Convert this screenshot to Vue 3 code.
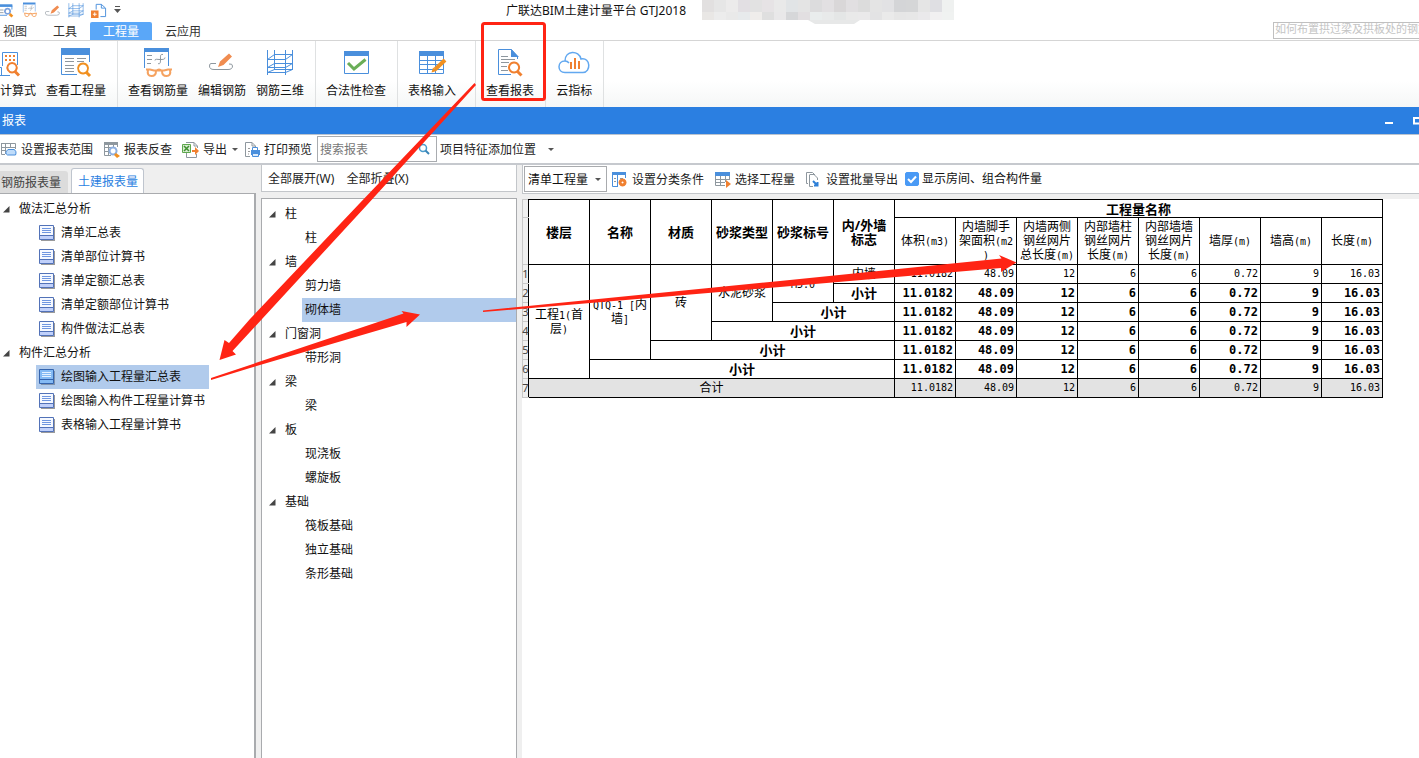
<script setup>
import { ref } from 'vue'

const BLUE = '#4a8fdc'
const ORANGE = '#f08030'
const GRAY = '#8e979e'

const s = (d, stroke, w = 1) => ({ d, stroke, w, fill: 'none' })
const f = (d, fill) => ({ d, fill, stroke: 'none', w: 0 })

const icons = {
  calc: [
    s('M2.500 19V5.500H17.500V18M0 20.500H1.500V28.500M0 28.500H10', BLUE),
    f('M5 8h2v2h-2zM9 8h2v2h-2zM13 8h2v2h-2zM5 12h2v2h-2zM9 12h2v2h-2zM13 12h2v2h-2z', ORANGE),
    s('M12 16a4.700 4.700 0 1 0 .1 0z', ORANGE, 2),
    s('M15 24.500L19 28.500', ORANGE, 3)
  ],
  quantity: [
    f('M1 1h29v7h-29z', BLUE),
    s('M1.500 8V27.500H17M29.500 8V15', BLUE),
    s('M5 11.500H14M17 11.500H26M5 14.500H14M17 14.500H24M5 18.500H14M5 21.500H14M5 24.500H14', GRAY),
    s('M23 16.500a5 5 0 1 0 .1 0z', '#f19020', 2),
    s('M26.500 25.500L30 29', '#f19020', 3)
  ],
  rebarQty: [
    f('M2 1h25v4h-25z', BLUE),
    s('M2.500 5V21M26.500 5V19', BLUE),
    s('M5 8.500H10M5 12.500H10M5 16.500H9M13 13.500C13 11.500 15 12.500 18 12.500S23 12.500 23 10.500M21 7.500C18 7 18.500 9 18.500 12S18.500 17.500 16 16.500', GRAY),
    s('M4 22.500H8L12 23.500H22L26 22.500H30M6 23C5 27 6.500 29 9.500 29S14 28 14 24M28 23C29 27 27.500 29 24.500 29S20 28 20 24M14 24C16 22 18 22 20 24', '#f5a260', 2)
  ],
  edit: [
    f('M12 20L14 14.500L23 6.500L26 9.500L17.500 18zM14.500 15.500L17 18', '#f08c50'),
    s('M10 16.500H5Q3.500 16.500 3.500 19Q3.500 22.500 8 22.500H22Q26.500 22.500 26.500 19Q26.500 16.500 23 17', GRAY)
  ],
  grid3d: [
    s('M3.500 3V28M10.500 3V23M21.500 3V28M28.500 3V23M10 7.500H29M3 12.500H22M10 16.500H29M3 20.500H22M10 22.500H29M3 25.500H22M3.500 12.500L10.500 7.500M21.500 12.500L28.500 7.500M3.500 20.500L10.500 16.500M21.500 20.500L28.500 16.500M3.500 25.500L10.500 22.500M21.500 25.500L28.500 22.500', BLUE)
  ],
  check: [
    s('M4.500 4.500H28.500V26.500H4.500z', BLUE),
    f('M4 4h25v5h-25z', BLUE),
    s('M8 16L14 22L25.500 12.500', '#6aae58', 3)
  ],
  tableEdit: [
    s('M3.500 5V26.500H27.500V5M11.500 9V26M19.500 9V26M4 13.500H27M4 17.500H27M4 22.500H27', BLUE),
    f('M3 4h25v5h-25z', BLUE),
    s('M29 13L19 22.500', '#f19020', 4),
    f('M15.500 25.500L17 20.500L20.500 24z', '#f19020')
  ],
  report: [
    s('M23.500 12V9.500L17.500 2.500H4.500V27.500H17', BLUE),
    f('M17 2L25 10H17z', BLUE),
    s('M7 9.500H14M7 12.500H21M7 15.500H15M7 19.500H13M7 23.500H14', GRAY),
    s('M20 15.500a5 5 0 1 0 .1 0z', ORANGE, 2),
    s('M23.500 24.500L27.500 28.500', ORANGE, 3)
  ],
  cloud: [
    s('M7 25.500C-1 25.500 -1 14 7 14C7 3 21 3 23 12C33 10 33 25.500 25 25.500zM7 14Q9.500 14 11 16', '#62a8f0', 1.5),
    s('M13 22V15M17 22V11M21 22V14', ORANGE, 2)
  ],
  qaFind: [
    s('M0 3.500H13.500V8M0 14.500H8', BLUE),
    f('M0 2h14v3h-14z', BLUE),
    s('M0 8.500H4M0 11.500H4', GRAY),
    s('M8.500 7a3 3 0 1 0 .1 0z', '#7aa0dc', 2),
    s('M11 13L14 16', '#f19020', 3)
  ],
  qaAdd: [
    s('M5.500 8V2.500H11L15.500 6.500V15.500H10M11 2.500V6.500H15', BLUE),
    f('M0 9h8v8h-8z', ORANGE),
    s('M4 11V15M2 13H6', '#fff')
  ],
  range: [
    s('M1.500 2.500H15.500V8M1.500 2V13.500H5M1 6.500H15M1 9.500H6M5.500 3V13M10.500 3V7', GRAY),
    f('M8 8H14Q17 10 16 14H7Q4 12 8 8z', '#bfdcfa'),
    s('M8 8.500H14Q17 10 15.500 14H7.500Q4 12 8 8.500z', BLUE)
  ],
  lookup: [
    s('M1.500 2.500H14.500V6M1.500 2V14.500H8M1 6.500H8M1 10.500H6M5.500 3V14M10.500 3V6', GRAY),
    f('M1 1h14v3h-14z', GRAY),
    s('M10 6.500a3.500 3.500 0 1 0 .1 0z', '#8fb0e0', 2),
    f('M11 14L13 12L17 15L14 17z', '#f19020')
  ],
  exportX: [
    s('M4 1.500H12L15.500 5V7M4.500 12V16.500H14.500V13M12 1.500V5H15', GRAY),
    s('M.500 3.500H8.500V11.500H.500z', '#5ea84d', 1),
    f('M1 4h7v7h-7z', '#d8ecd2'),
    s('M2 5L7 10M7 5L2 10', '#3f9030', 1.5),
    f('M10 9H13V6L17 10L13 14V11H10z', ORANGE)
  ],
  print: [
    s('M6 15.500H1.500V1.500H8L11.500 5V7M8 1.500V5H11', GRAY),
    s('M4 7.500H6M4 10.500H6M4 13H5', '#999'),
    f('M7 9H16V14H7z', BLUE),
    s('M8.500 9V6.500H13.500V9', BLUE),
    f('M9 12h5v4h-5z', '#dcebfb'),
    s('M8.500 12.500H14.500V15.500H8.500z', BLUE)
  ],
  classify: [
    s('M1.500 2.500H14.500V7M1.500 2V15.500H7M6.500 4V15', BLUE),
    f('M1 1h14v3h-14z', BLUE),
    s('M3 7.500H5M3 10.500H5M9 7.500H12', GRAY),
    s('M11.500 9a2.500 2.500 0 1 0 .1 0z', ORANGE, 3)
  ],
  select: [
    s('M1.500 2.500H15.500V9M1.500 3V14.500H11M6.500 5V14M11.500 5V11M1 8.500H15M1 11.500H11', GRAY),
    f('M1 1h15v4h-15z', BLUE),
    f('M12 9L17 13L12 17z', ORANGE)
  ],
  batch: [
    s('M3 12.500H1.500V1.500H7.500L10 4M4.500 3.500H9L12.500 7V9M4.500 4V15.500H8', GRAY),
    s('M8 10L12.500 14.500M9 14.500H12.500V11', '#2f80d8', 2)
  ],
  page: [
    f('M2 2h14v14h-14z', '#9a9a9a'),
    f('M1 1h14v14h-14z', '#f6f9ff'),
    f('M1 11h14v4h-14z', '#c0d0fa'),
    s('M.500.500H14.500V14.500H.500zM1 10.500H14', '#5272b8'),
    s('M3 3.500H12M3 5.500H12M3 7.500H12', '#6f96e0')
  ],
  pageOn: [
    f('M2 2h14v14h-14z', '#7f93ad'),
    f('M1 1h14v14h-14z', '#84baf4'),
    s('M.500.500H14.500V14.500H.500zM1 10.500H14', '#3464ae'),
    s('M3 3.500H12M3 5.500H12M3 7.500H12', '#e4f1ff')
  ]
}

const quick = [
  { icon: 'qaFind', box: '0 0 17 17', name: '查看工程量' },
  { icon: 'rebarQty', box: '0 0 32 32', name: '查看钢筋量' },
  { icon: 'edit', box: '3 1 26 26', name: '编辑钢筋' },
  { icon: 'grid3d', box: '2 1 28 28', name: '钢筋三维' },
  { icon: 'qaAdd', box: '0 0 17 17', name: '新建' }
]

const menu = ['视图', '工具', '工程量', '云应用']
const activeMenu = ref('工程量')

const ribbon = [
  [{ icon: 'calc', label: '计算式' }, { icon: 'quantity', label: '查看工程量' }],
  [{ icon: 'rebarQty', label: '查看钢筋量' }, { icon: 'edit', label: '编辑钢筋' }, { icon: 'grid3d', label: '钢筋三维' }],
  [{ icon: 'check', label: '合法性检查' }],
  [{ icon: 'tableEdit', label: '表格输入' }],
  [{ icon: 'report', label: '查看报表' }],
  [{ icon: 'cloud', label: '云指标' }]
]

const shades = [
  ['#e2e0e0', '#e6e6e6', '#ecebeb', '#e2dfe3', '#e2e2e2', '#e6e3e5', '#e9e9e9', '#e1e4e6', '#e4e4e4', '#dcdcdd', '#e2e0e2', '#d9d7d8', '#e1dfe1', '#dcdcdc', '#e4e4e4', '#e2e2e4', '#d4d5d7', '#d5d6d7', '#e5e5e5', '#dfdfe3', '#eff1f0'],
  ['#e9e7e5', '#ececec', '#e9e9e9', '#e7eaec', '#efedeb', '#dfdfdf', '#e9e8e9', '#d6d7d9', '#e2dfe1', '#e9eded', '#e8eaea', '#e4e6e6', '#e9e9e9', '#eae9ea', '#e3e3e4', '#eaeaea', '#e6e6e6', '#e7e7e7', '#eae9eb', '#f1f0f1', '#f0f2f1']
]

const activeReport = ref('绘图输入工程量汇总表')
const reports = [
  { name: '做法汇总分析', items: ['清单汇总表', '清单部位计算书', '清单定额汇总表', '清单定额部位计算书', '构件做法汇总表'] },
  { name: '构件汇总分析', items: ['绘图输入工程量汇总表', '绘图输入构件工程量计算书', '表格输入工程量计算书'] }
]

const activePart = ref('砌体墙')
const parts = [
  { name: '柱', items: ['柱'] },
  { name: '墙', items: ['剪力墙', '砌体墙'] },
  { name: '门窗洞', items: ['带形洞'] },
  { name: '梁', items: ['梁'] },
  { name: '板', items: ['现浇板', '螺旋板'] },
  { name: '基础', items: ['筏板基础', '独立基础', '条形基础'] }
]

const keyHeads = [['楼层'], ['名称'], ['材质'], ['砂浆类型'], ['砂浆标号'], ['内/外墙', '标志']]
const valueHeads = [
  ['体积(m3)'],
  ['内墙脚手', '架面积(m2', ')'],
  ['内墙两侧', '钢丝网片', '总长度(m)'],
  ['内部墙柱', '钢丝网片', '长度(m)'],
  ['内部墙墙', '钢丝网片', '长度(m)'],
  ['墙厚(m)'],
  ['墙高(m)'],
  ['长度(m)']
]
const values = ['11.0182', '48.09', '12', '6', '6', '0.72', '9', '16.03']
const rows = [
  {
    cells: [
      { lines: ['工程1(首', '层)'], rows: 6 },
      { lines: ['QTQ-1 [内', '墙]'], rows: 5 },
      { lines: ['砖'], rows: 4 },
      { lines: ['水泥砂浆'], rows: 3 },
      { lines: ['M5.0'], rows: 2 },
      { lines: ['内墙'] }
    ]
  },
  ...[1, 2, 3, 4, 5].map((n) => ({ strong: true, cells: [{ lines: ['小计'], cols: n }] })),
  { total: true, cells: [{ lines: ['合计'], cols: 6 }] }
]

const pieces = (line) => line.split(/([\x20-\x7e]+)/).filter(Boolean)
const isLatin = (t) => /^[\x20-\x7e]/.test(t)

const search = ref('')
const help = ref('')
const mode = ref('清单工程量')
const showRooms = ref(true)
</script>

<template>
  <div class="app">
    <header class="title-row">
      <div class="quick">
        <button v-for="q in quick" :key="q.icon" :aria-label="q.name">
          <svg :viewBox="q.box" width="16" height="16">
            <path v-for="(p, i) in icons[q.icon]" :key="i" :d="p.d" :fill="p.fill" :stroke="p.stroke" :stroke-width="p.w" />
          </svg>
        </button>
        <button aria-label="自定义快速访问" class="more">
          <svg width="7" height="8"><path d="M1 .500H6" stroke="#555" /><path d="M0 3H7L3.500 7z" fill="#555" /></svg>
        </button>
      </div>
      <div class="title">广联达BIM土建计量平台 GTJ2018</div>
      <svg class="mosaic" width="252" height="24" aria-hidden="true">
        <path d="M106 20H158L152 24H113z" fill="#e7e8e8" />
        <g v-for="(line, r) in shades" :key="r">
          <rect v-for="(c, i) in line" :key="i" :x="i * 12" :y="r * 12" width="12" :height="r ? 8 : 12" :fill="c" />
        </g>
      </svg>
    </header>

    <nav class="menu">
      <button v-for="m in menu" :key="m" :class="{ on: m === activeMenu }" @click="activeMenu = m">{{ m }}</button>
      <input v-model="help" class="help" aria-label="帮助搜索" placeholder="如何布置拱过梁及拱板处的钢筋" />
    </nav>

    <section class="ribbon">
      <div v-for="(group, g) in ribbon" :key="g" class="group">
        <button v-for="b in group" :key="b.label">
          <svg width="32" height="32">
            <path v-for="(p, i) in icons[b.icon]" :key="i" :d="p.d" :fill="p.fill" :stroke="p.stroke" :stroke-width="p.w" />
          </svg>
          <span>{{ b.label }}</span>
        </button>
      </div>
    </section>

    <div class="window-bar">
      <h1>报表</h1>
      <button aria-label="最小化"><svg width="8" height="8"><path d="M0 5h8v2h-8z" fill="#fff" /></svg></button>
      <button aria-label="最大化" class="max"><svg width="6" height="8"><path d="M7 1H1V6.500H7" fill="none" stroke="#fff" stroke-width="2" /></svg></button>
    </div>

    <div class="toolbar">
      <button class="tool range">
        <svg width="18" height="18"><path v-for="(p, i) in icons.range" :key="i" :d="p.d" :fill="p.fill" :stroke="p.stroke" :stroke-width="p.w" /></svg>设置报表范围
      </button>
      <button class="tool">
        <svg width="18" height="18"><path v-for="(p, i) in icons.lookup" :key="i" :d="p.d" :fill="p.fill" :stroke="p.stroke" :stroke-width="p.w" /></svg>报表反查
      </button>
      <button class="tool export">
        <svg width="18" height="18"><path v-for="(p, i) in icons.exportX" :key="i" :d="p.d" :fill="p.fill" :stroke="p.stroke" :stroke-width="p.w" /></svg>导出<i class="caret"></i>
      </button>
      <button class="tool print">
        <svg width="18" height="18"><path v-for="(p, i) in icons.print" :key="i" :d="p.d" :fill="p.fill" :stroke="p.stroke" :stroke-width="p.w" /></svg>打印预览
      </button>
      <label class="search">
        <input v-model="search" aria-label="搜索报表" placeholder="搜索报表" />
        <svg width="12" height="12"><circle cx="5" cy="5" r="3.500" fill="none" stroke="#4a9ccc" stroke-width="1.500" /><path d="M7.500 7.500L11 11" stroke="#3a86b8" stroke-width="2" /></svg>
      </label>
      <button class="tool feature">项目特征添加位置<i class="caret"></i></button>
    </div>

    <main class="body">
      <aside class="left">
        <div class="tabs">
          <button>钢筋报表量</button>
          <button class="on">土建报表量</button>
        </div>
        <div class="panel">
          <ul class="tree reports">
            <li v-for="g in reports" :key="g.name">
              <button class="parent"><svg width="7" height="7"><path d="M6.500 0V6.500H0z" fill="#444" /></svg>{{ g.name }}</button>
              <ul>
                <li v-for="item in g.items" :key="item">
                  <button class="leaf" :class="{ on: item === activeReport }" @click="activeReport = item">
                    <svg width="17" height="17"><path v-for="(p, i) in icons[item === activeReport ? 'pageOn' : 'page']" :key="i" :d="p.d" :fill="p.fill" :stroke="p.stroke" :stroke-width="p.w" /></svg>{{ item }}
                  </button>
                </li>
              </ul>
            </li>
          </ul>
        </div>
      </aside>

      <section class="middle">
        <div class="fold">
          <button>全部展开(W)</button>
          <button>全部折叠(X)</button>
        </div>
        <div class="panel">
          <ul class="tree parts">
            <li v-for="g in parts" :key="g.name">
              <button class="parent"><svg width="7" height="7"><path d="M6.500 0V6.500H0z" fill="#444" /></svg>{{ g.name }}</button>
              <ul>
                <li v-for="item in g.items" :key="item">
                  <button class="leaf" :class="{ on: item === activePart }" @click="activePart = item">{{ item }}</button>
                </li>
              </ul>
            </li>
          </ul>
        </div>
      </section>

      <section class="right">
        <div class="options">
          <div class="mode">
            <select v-model="mode" aria-label="工程量类型"><option>清单工程量</option><option>定额工程量</option></select>
            <i class="caret"></i>
          </div>
          <button class="tool">
            <svg width="18" height="18"><path v-for="(p, i) in icons.classify" :key="i" :d="p.d" :fill="p.fill" :stroke="p.stroke" :stroke-width="p.w" /></svg>设置分类条件
          </button>
          <button class="tool">
            <svg width="18" height="18"><path v-for="(p, i) in icons.select" :key="i" :d="p.d" :fill="p.fill" :stroke="p.stroke" :stroke-width="p.w" /></svg>选择工程量
          </button>
          <button class="tool">
            <svg width="18" height="18"><path v-for="(p, i) in icons.batch" :key="i" :d="p.d" :fill="p.fill" :stroke="p.stroke" :stroke-width="p.w" /></svg>设置批量导出
          </button>
          <label class="rooms">
            <input v-model="showRooms" type="checkbox" />
            <svg class="tick" width="14" height="14"><path v-if="showRooms" d="M3 7L6 10L11 4.500" fill="none" stroke="#fff" stroke-width="2" /></svg>
            显示房间、组合构件量
          </label>
        </div>
        <div class="sheet">
          <table>
            <colgroup><col class="num" /><col v-for="n in 14" :key="n" class="data" /></colgroup>
            <thead>
              <tr class="h1">
                <td class="rownum"></td>
                <th v-for="(h, i) in keyHeads" :key="i" rowspan="2" scope="col"><div v-for="l in h" :key="l">{{ l }}</div></th>
                <th colspan="8" scope="colgroup">工程量名称</th>
              </tr>
              <tr class="h2">
                <td class="rownum"></td>
                <th v-for="(h, i) in valueHeads" :key="i" scope="col" class="light">
                  <div v-for="l in h" :key="l"><span v-for="(t, k) in pieces(l)" :key="k" :class="{ latin: isLatin(t) }">{{ t }}</span></div>
                </th>
              </tr>
            </thead>
            <tbody>
              <tr v-for="(row, r) in rows" :key="r" :class="{ strong: row.strong, total: row.total }">
                <td class="rownum"><span>{{ r + 1 }}</span></td>
                <td v-for="(c, i) in row.cells" :key="i" :rowspan="c.rows || 1" :colspan="c.cols || 1">
                  <div v-for="l in c.lines" :key="l"><span v-for="(t, k) in pieces(l)" :key="k" :class="{ latin: isLatin(t) }">{{ t }}</span></div>
                </td>
                <td v-for="(v, i) in values" :key="'v' + i" class="value">{{ v }}</td>
              </tr>
            </tbody>
          </table>
        </div>
      </section>
    </main>

    <svg class="marks" width="1100" height="400" aria-hidden="true">
      <rect x="482.500" y="23.500" width="62" height="76" rx="2" fill="none" stroke="#ff2414" stroke-width="3" />
      <g fill="#ff2414">
        <path d="M474.500 83L476 85L367 205L250 332L232.500 351L236 354.500L219.500 360L224.500 340L229 343L250 319L359 204z" />
        <path d="M211 378L403.500 313.500L401.500 311L420 314.500L406.500 327L406.500 322L250 368L211 380z" />
        <path d="M483 310.500L780 281L1001.500 258.500L999 255L1016.500 262.500L1001 272L1001 268L780 287L483 312z" />
      </g>
    </svg>
  </div>
</template>

<style>
html, body { margin: 0; background: #fff; }
</style>

<style scoped>
.app {
  position: relative;
  display: flex;
  flex-direction: column;
  height: 100vh;
  overflow: hidden;
  font: 12px/16px "Noto Sans", "Noto Sans CJK SC", sans-serif;
  color: #111;
  background: #fff;
}
button, input, select { font: inherit; color: inherit; margin: 0; }
button { border: 0; padding: 0; background: none; white-space: nowrap; cursor: pointer; }
svg { display: block; flex: none; }
ul { list-style: none; margin: 0; padding: 0; }

.title-row { display: grid; grid-template-columns: 506px 196px 1fr; flex: none; height: 22px; }
.quick { display: flex; align-items: center; gap: 7px; height: 20px; }
.quick button:first-child svg { width: 15px; }
.title { line-height: 21px; white-space: nowrap; }
.mosaic { overflow: visible; }

.menu { display: flex; flex: none; height: 18px; border-bottom: 1px solid #d5d5d5; }
.menu button { padding: 2px 13px 0; line-height: 16px; color: #333; }
.menu button:first-child { padding-left: 3px; }
.menu button.on { background: #5aa7f8; color: #fff; border-radius: 2px 2px 0 0; }
.help {
  box-sizing: border-box;
  width: 146px;
  height: 17px;
  margin-left: auto;
  padding: 0 0 5px 1px;
  border: 1px solid #c0c0c0;
  border-right: 0;
  font-size: 11px;
  background: #fff;
}
.help::placeholder { color: #c4c4c4; }

.ribbon { display: flex; flex: none; height: 66px; background: linear-gradient(#fff 60%, #f5f7f7); }
.group { display: flex; gap: 10px; padding: 6px 11px 0 10px; border-right: 1px solid #dfe1e2; }
.group:first-child { padding-left: 0; }
.group:nth-child(4) { padding-right: 19px; }
.group button { display: flex; flex-direction: column; align-items: center; gap: 4px; height: 52px; }
.group:first-child button:first-child { align-items: flex-start; }

.window-bar { display: flex; align-items: center; flex: none; height: 27px; background: #2b7fe1; border-bottom: 1px solid #b9c3cf; color: #fff; }
.window-bar h1 { flex: 1; margin: 0; padding-left: 2px; font-size: 12px; font-weight: 400; }
.window-bar .max { margin-left: 20px; }

.toolbar { display: flex; align-items: center; flex: none; height: 28px; background: #fff; border-bottom: 2px solid #c6c9ce; }
.tool { display: flex; align-items: center; gap: 3px; padding-top: 1px; color: #222; }
.toolbar .tool { margin-right: 10px; }
.toolbar .tool.export { margin-right: 8px; }
.toolbar .tool.print { margin-right: 5px; gap: 2px; }
.caret { width: 0; height: 0; border: 3px solid transparent; border-top-color: #555; border-bottom: 0; margin-left: 3px; }
.toolbar .tool .caret { margin-right: -2px; margin-left: 2px; }
.search { display: flex; align-items: center; box-sizing: border-box; width: 120px; height: 26px; border: 1px solid #a9acb0; padding-right: 6px; margin-right: 3px; background: #fff; }
.search input { flex: 1; min-width: 0; border: 0; padding: 1px 2px 0; outline: 0; background: none; }
.search input::placeholder { color: #777; }
.toolbar .feature .caret { margin-left: 9px; }

.body { display: grid; grid-template-columns: 256px 256px minmax(0, 1fr); gap: 5px; flex: 1; min-height: 0; background: #efefef; }
.left, .middle, .right { display: flex; flex-direction: column; min-width: 0; min-height: 0; }
.panel { flex: 1; background: #fff; border: 1px solid #a9abae; border-bottom: 0; }
.left .panel { border-left: 0; border-right-width: 2px; }

.tabs { display: flex; align-items: flex-end; gap: 3px; height: 28px; }
.tabs button { box-sizing: border-box; height: 22px; padding: 1px 7px 0 1px; background: #dcdcdc; color: #444; border-radius: 0 3px 0 0; }
.tabs button.on { height: 25px; padding: 1px 5px 0 6px; border: 1px solid #bfc5ce; border-bottom: 0; border-radius: 3px 3px 0 0; background: #fff; color: #2b7fe1; }

.tree { padding-top: 3px; }
.tree button { display: flex; align-items: center; box-sizing: border-box; height: 24px; }
.parent { gap: 9px; padding-left: 3px; }
.reports .leaf { gap: 5px; margin-left: 36px; padding: 0 28px 0 3px; }
.reports .leaf.on { background: #b1cbec; }
.parts .parent { padding-left: 7px; gap: 9px; }
.parts .leaf { width: calc(100% - 40px); margin-left: 40px; padding-left: 3px; }
.parts .leaf.on { background: #b1cbec; }

.fold { display: flex; align-items: center; gap: 12px; box-sizing: border-box; height: 27px; margin-bottom: 6px; padding: 2px 0 0 6px; background: #fff; border: 1px solid #c3c6ca; border-top: 0; color: #222; }

.options { display: flex; align-items: center; gap: 10px; box-sizing: border-box; height: 29px; margin-bottom: 5px; padding-left: 1px; background: #fff; border-left: 1px solid #c3c6ca; border-bottom: 1px solid #c3c6ca; }
.mode { display: flex; align-items: center; box-sizing: border-box; width: 83px; height: 26px; border: 1px solid #a9abae; margin-right: -6px; padding-right: 5px; }
.mode select { flex: 1; min-width: 0; appearance: none; border: 0; outline: 0; padding: 1px 0 0 3px; background: none; }
.mode .caret { margin-left: 0; }
.rooms { display: flex; align-items: center; gap: 3px; margin-left: -3px; }
.rooms input { appearance: none; width: 14px; height: 14px; border: 1px solid #4a9af5; border-radius: 2px; }
.rooms input:checked { background: #4a9af5; }
.rooms .tick { margin-left: -17px; pointer-events: none; }

.sheet { flex: 1; background: #fff; }
table { border-collapse: collapse; table-layout: fixed; width: 861px; line-height: 14px; color: #000; }
col.num { width: 6px; }
col.data { width: 61px; }
tr { height: 19px; }
tr.h1 { height: 18px; }
tr.h2 { height: 47px; }
th, td { padding: 0 2px; border: 1px solid #000; text-align: center; vertical-align: middle; white-space: nowrap; font-size: 12px; }
th { padding: 0; font-size: 13px; font-weight: 700; }
th.light { font-size: 12px; font-weight: 400; }
.latin { font-family: "DejaVu Sans Mono", monospace; font-size: 10px; line-height: 1px; }
td.value { text-align: right; font-family: "DejaVu Sans Mono", monospace; font-size: 10px; }
.strong td { font-size: 13px; font-weight: 700; }
.strong td.value { font-size: 12px; }
.total td { background: #e3e3e3; }
tr td.rownum { padding: 0; border-color: #c8c8c8; border-right-color: #000; background: #f0f0f0; color: #444; font-size: 11px; font-weight: 400; }
.rownum span { display: flex; justify-content: center; }

.marks { position: absolute; top: 0; left: 0; pointer-events: none; }
</style>
